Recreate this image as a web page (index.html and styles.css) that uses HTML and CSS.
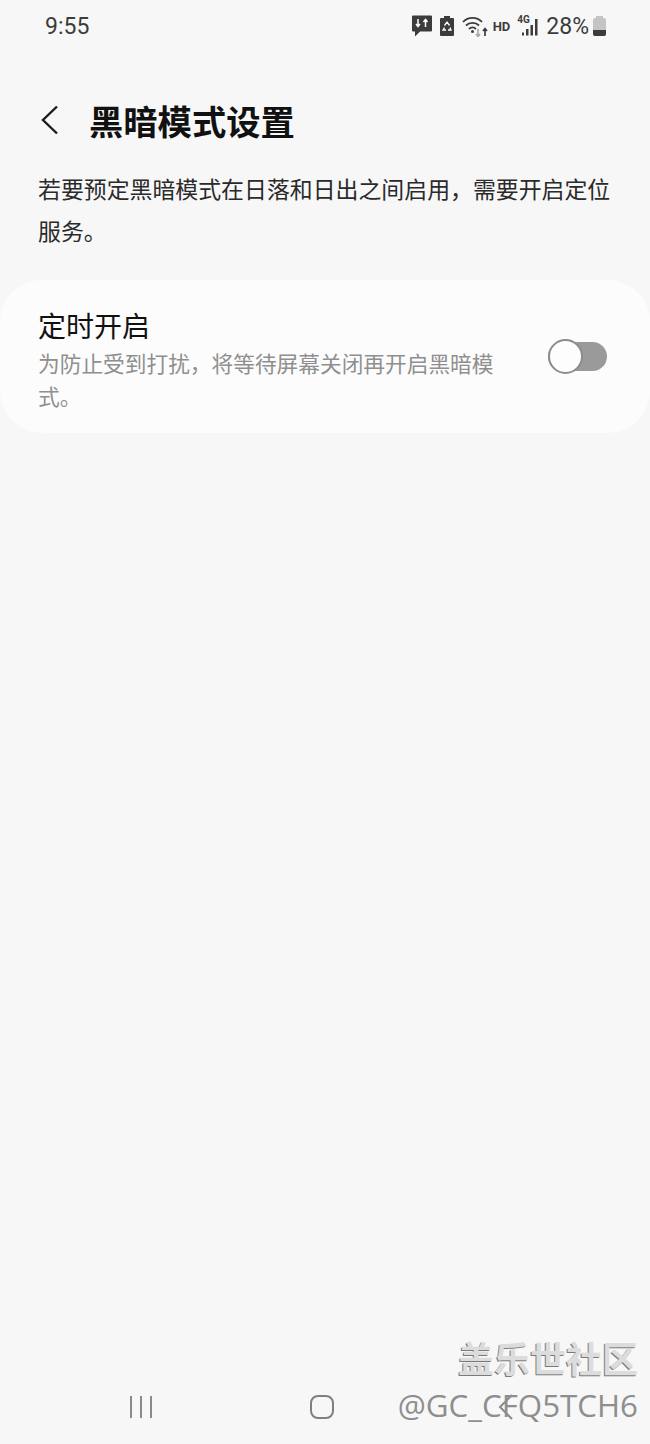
FILE: index.html
```html
<!DOCTYPE html>
<html lang="zh-CN">
<head>
    <meta charset="UTF-8">
    <meta name="viewport" content="width=device-width, initial-scale=1.0">
    <title>黑暗模式设置</title>
    <link rel="stylesheet" href="styles.css">
</head>
<body>
    <div class="screen">
        <div class="status-bar">
            <span class="time">9:55</span>
            <div class="status-icons">
                <svg class="icon-msg" width="20" height="22" viewBox="0 0 20 22">
                    <path d="M1 0.500h18a1 1 0 0 1 1 1v14a1 1 0 0 1-1 1H8l-5 5v-5H1a1 1 0 0 1-1-1v-14a1 1 0 0 1 1-1z" fill="#3c3c3c"/>
                    <path d="M6 4v7M4 9l2 2.500 2-2.500M13.500 12V5M11.500 7l2-2.500 2 2.500" fill="none" stroke="#fff" stroke-width="1.500"/>
                </svg>
                <svg class="icon-bat-box" width="14" height="20" viewBox="0 0 14 20">
                    <path d="M4 0h6v2h3a1 1 0 0 1 1 1v16a1 1 0 0 1-1 1H1a1 1 0 0 1-1-1V3a1 1 0 0 1 1-1h3z" fill="#3c3c3c"/>
                    <path d="M4.500 9.500L7 6l2.500 3.500M10 11.500l1 2.500H8M6 14H3l1.500-2.500" fill="none" stroke="#fff" stroke-width="1.300"/>
                </svg>
                <svg class="icon-wifi" width="26" height="21" viewBox="0 0 26 21">
                    <path d="M1 6C6 0.500 15 0.500 20 6M4 9.500c3.500-3.500 9.500-3.500 13 0M7 13c2-2 5-2 7 0" fill="none" stroke="#3c3c3c" stroke-width="1.800"/>
                    <circle cx="10.500" cy="15.500" r="1.500" fill="#3c3c3c"/>
                    <path d="M16 13v7M14 18l2 2.500 2-2.500" fill="none" stroke="#aaa" stroke-width="1.700"/>
                    <path d="M23 20v-7M21 15l2-2.500 2 2.500" fill="none" stroke="#3c3c3c" stroke-width="1.700"/>
                </svg>
                <span class="hd">HD</span>
                <div class="signal">
                    <span class="net">4G</span>
                    <svg width="22" height="22" viewBox="0 0 22 22">
                        <path d="M5 17.500h2v3H5zM9 14h2.500v6.500H9zM13.500 10H16v10.500h-2.500zM18 4h2.500v16.500H18z" fill="#3c3c3c"/>
                    </svg>
                </div>
                <span class="battery-text">28%</span>
                <div class="battery">
                    <div class="battery-cap"></div>
                    <div class="battery-body"><div class="battery-fill"></div></div>
                </div>
            </div>
        </div>

        <div class="header">
            <svg class="back" width="20" height="32" viewBox="0 0 20 32">
                <path d="M17 2.500L3 16l14 13.500" fill="none" stroke="#1c1c1c" stroke-width="2.400"/>
            </svg>
            <h1>黑暗模式设置</h1>
        </div>

        <p class="intro">若要预定黑暗模式在日落和日出之间启用，需要开启定位服务。</p>

        <div class="card">
            <div class="card-text">
                <div class="card-title">定时开启</div>
                <div class="card-sub">为防止受到打扰，将等待屏幕关闭再开启黑暗模式。</div>
            </div>
            <div class="switch"><div class="knob"></div></div>
        </div>

        <div class="spacer"></div>

        <div class="nav-bar">
            <svg width="26" height="24" viewBox="0 0 26 24">
                <path d="M3 1v22M13 1v22M23 1v22" stroke="#8a8a8a" stroke-width="2" fill="none"/>
            </svg>
            <svg class="nav-home" width="26" height="26" viewBox="0 0 26 26">
                <rect x="2" y="2" width="22" height="22" rx="7" fill="none" stroke="#7f7f7f" stroke-width="2"/>
            </svg>
            <svg class="nav-back" width="16" height="26" viewBox="0 0 16 26">
                <path d="M14 1L2 13l12 12" fill="none" stroke="#8a8a8a" stroke-width="2"/>
            </svg>
        </div>

        <div class="watermark">
            <div class="wm-cn">盖乐世社区</div>
            <div class="wm-id">@GC_CFQ5TCH6</div>
        </div>
    </div>
</body>
</html>
```

FILE: styles.css
```css
body {
    margin: 0;
    background-color: #f7f7f7;
    font-family: "Noto Sans CJK SC", "Noto Sans", sans-serif;
}
.screen {
    position: relative;
    width: 650px;
    height: 1444px;
    display: flex;
    flex-direction: column;
    overflow: hidden;
}
.status-bar {
    height: 52px;
    display: flex;
    justify-content: space-between;
    align-items: center;
    padding: 0 44px 0 45px;
    color: #3c3c3c;
}
.time {
    font-family: "Roboto", sans-serif;
    font-size: 23px;
}
.status-icons {
    display: flex;
    align-items: center;
}
.icon-msg {
    margin-right: 8px;
}
.icon-bat-box {
    margin-right: 8px;
}
.icon-wifi {
    margin-right: 5px;
}
.hd {
    font-family: "Roboto", sans-serif;
    font-size: 13px;
    font-weight: 700;
    margin-right: 7px;
}
.signal {
    position: relative;
    width: 22px;
    height: 22px;
    margin-right: 7px;
}
.net {
    position: absolute;
    left: 0;
    top: -1px;
    font-family: "Roboto", sans-serif;
    font-size: 10px;
    font-weight: 700;
}
.battery-text {
    font-family: "Roboto", sans-serif;
    font-size: 23px;
    margin-right: 4px;
}
.battery {
    width: 13px;
    height: 20px;
    display: flex;
    flex-direction: column;
    align-items: center;
}
.battery-cap {
    width: 7px;
    height: 2px;
    background-color: #c4c4c4;
}
.battery-body {
    width: 13px;
    flex: 1;
    background-color: #c4c4c4;
    border-radius: 2px;
    display: flex;
    align-items: flex-end;
    overflow: hidden;
}
.battery-fill {
    width: 100%;
    height: 6px;
    background-color: #3c3c3c;
}
.header {
    height: 46px;
    margin-top: 45px;
    padding-left: 40px;
    display: flex;
    align-items: center;
}
.back {
    margin-right: 29px;
}
h1 {
    margin: 0;
    font-size: 34.300px;
    font-weight: 700;
    color: #111;
}
.intro {
    margin: 24px 0 0;
    padding: 0 38px;
    font-size: 22.900px;
    line-height: 42px;
    color: #2a2a2a;
}
.card {
    margin-top: 29px;
    height: 153px;
    box-sizing: border-box;
    padding: 24px 43px 0 38px;
    background-color: #fcfcfc;
    border-radius: 42px;
    display: flex;
    justify-content: space-between;
}
.card-text {
    width: 460px;
}
.card-title {
    font-size: 28px;
    line-height: 42px;
    color: #111;
}
.card-sub {
    font-size: 21.700px;
    line-height: 33px;
    color: #8f8f8f;
}
.switch {
    position: relative;
    width: 59px;
    height: 29px;
    margin-top: 38px;
    background-color: #9a9a9a;
    border-radius: 15px;
}
.knob {
    position: absolute;
    left: 0;
    top: -3px;
    width: 31px;
    height: 31px;
    background-color: #fdfdfd;
    border: 2px solid #8c8c8c;
    border-radius: 50%;
}
.spacer {
    flex: 1;
}
.nav-bar {
    height: 74px;
    display: flex;
    align-items: center;
    padding-left: 128px;
}
.nav-home {
    margin-left: 155px;
}
.nav-back {
    margin-left: 163px;
}
.watermark {
    position: absolute;
    right: 12px;
    bottom: 17px;
    text-align: right;
}
.wm-cn {
    font-size: 36px;
    line-height: 46px;
    font-weight: 700;
    color: #dcdcdc;
    text-shadow: -1px 1px 0 #7a7a7a;
}
.wm-id {
    margin-top: 3px;
    font-family: "Open Sans", sans-serif;
    font-size: 31.300px;
    line-height: 44px;
    color: #8e8e8e;
}
```
